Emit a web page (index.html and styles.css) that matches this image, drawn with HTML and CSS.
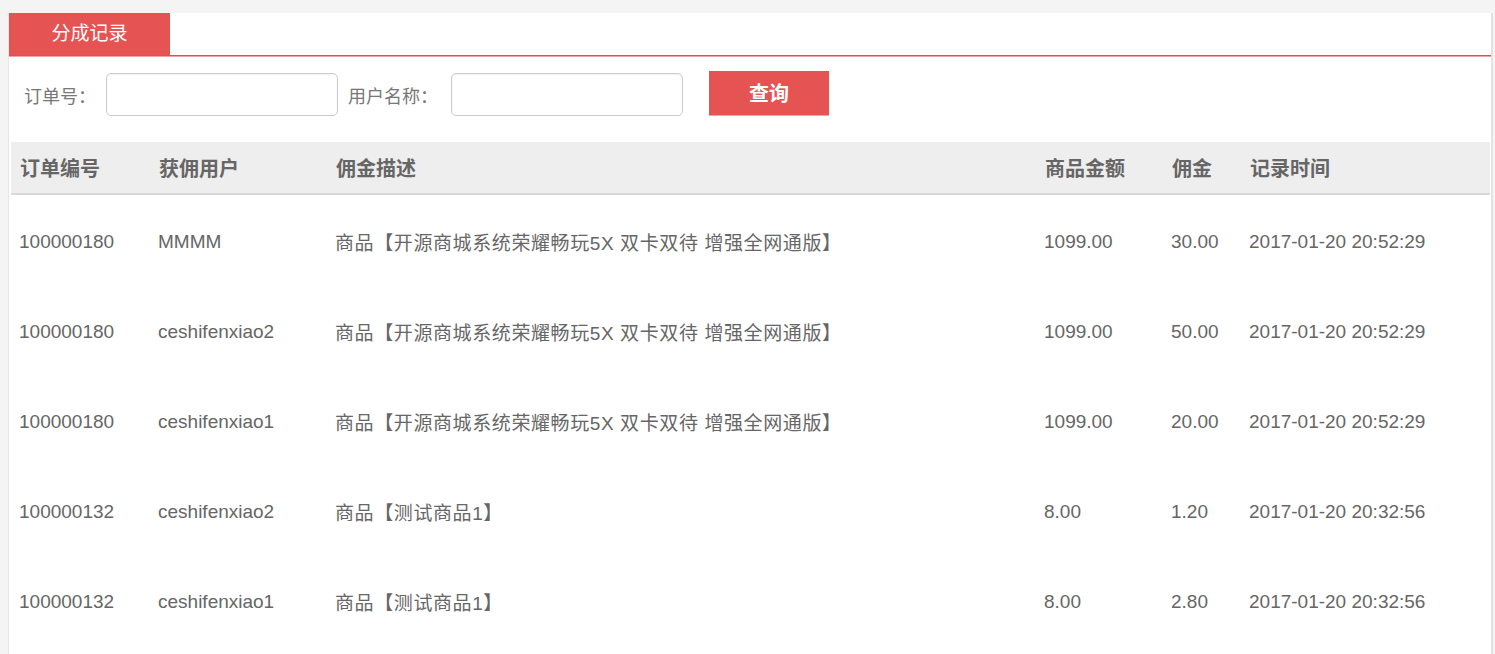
FILE: index.html
```html
<!DOCTYPE html>
<html lang="zh-CN">
<head>
  <meta charset="UTF-8">
  <meta name="viewport" content="width=device-width, initial-scale=1.0">
  <link rel="stylesheet" href="styles.css">
  <title>分成记录</title>
</head>
<body>

  <div id="record_wrap">

    <ul class="tab_list">
      <li class="on">分成记录</li>
    </ul>

    <div class="search_box">
      <label for="order_no">订单号：</label>
      <input type="text" id="order_no" class="txt">
      <label for="user_name" class="name_label">用户名称：</label>
      <input type="text" id="user_name" class="txt">
      <button class="search_btn">查询</button>
    </div>

    <table class="record_table">
      <colgroup>
        <col class="c1"><col class="c2"><col class="c3"><col class="c4"><col class="c5"><col class="c6">
      </colgroup>
      <thead>
        <tr>
          <th>订单编号</th><th>获佣用户</th><th>佣金描述</th><th>商品金额</th><th>佣金</th><th>记录时间</th>
        </tr>
      </thead>
      <tbody>
        <tr>
          <td>100000180</td><td>MMMM</td><td class="desc">商品【开源商城系统荣耀畅玩5X 双卡双待 增强全网通版】</td><td>1099.00</td><td>30.00</td><td>2017-01-20 20:52:29</td>
        </tr>
        <tr>
          <td>100000180</td><td>ceshifenxiao2</td><td class="desc">商品【开源商城系统荣耀畅玩5X 双卡双待 增强全网通版】</td><td>1099.00</td><td>50.00</td><td>2017-01-20 20:52:29</td>
        </tr>
        <tr>
          <td>100000180</td><td>ceshifenxiao1</td><td class="desc">商品【开源商城系统荣耀畅玩5X 双卡双待 增强全网通版】</td><td>1099.00</td><td>20.00</td><td>2017-01-20 20:52:29</td>
        </tr>
        <tr>
          <td>100000132</td><td>ceshifenxiao2</td><td class="desc">商品【测试商品1】</td><td>8.00</td><td>1.20</td><td>2017-01-20 20:32:56</td>
        </tr>
        <tr>
          <td>100000132</td><td>ceshifenxiao1</td><td class="desc">商品【测试商品1】</td><td>8.00</td><td>2.80</td><td>2017-01-20 20:32:56</td>
        </tr>
      </tbody>
    </table>

  </div>

</body>
</html>
```

FILE: styles.css
```css
body,ul,li{
  margin:0px; padding:0px; list-style:none;
}

body{
  background:#f4f4f4; padding:13px 2px 0px 8px;
  font-family:"Liberation Sans","Noto Sans CJK SC",sans-serif; color:#666;
  overflow:hidden;
}

div#record_wrap{
  background:#fff; border-left:1px solid #e6e6e6; border-right:2px solid #e3e3e3;
  min-height:700px;
}

ul.tab_list{
  display:flex; height:42px; border-bottom:1px solid #e05050; box-shadow:0px 1px 0px #f3a3a3;
}

ul.tab_list li{
  width:161px; line-height:42px; text-align:center; font-size:19px; color:#fff;
}

ul.tab_list li.on{
  background:#e55353;
}

div.search_box{
  display:flex; align-items:center; padding:16px 0px 0px 15px; height:45px;
}

div.search_box label{
  font-size:18px; color:#777; margin-right:10px;
}

div.search_box label.name_label{
  margin-right:13px;
}

div.search_box input.txt{
  width:230px; height:41px; border:1px solid #ccc; border-radius:5px; padding:0px;
  box-shadow:inset 0px 1px 2px rgba(0,0,0,0.06); margin-right:10px;
}

button.search_btn{
  width:120px; height:45px; margin-left:16px; margin-top:-3px; border:none;
  background:#e55353; color:#fff; font-size:20px; font-weight:bold;
  font-family:"Liberation Serif","Noto Sans CJK SC",serif;
  border-bottom:1px solid #f3a3a3;
}

table.record_table{
  width:1479px; margin:25px 0px 0px 2px; border-collapse:collapse; table-layout:fixed;
}

col.c1{ width:139px; }
col.c2{ width:177px; }
col.c3{ width:709px; }
col.c4{ width:127px; }
col.c5{ width:78px; }
col.c6{ width:249px; }

table.record_table th{
  height:51px; background:#eee; border-bottom:2px solid #d9d9d9;
  text-align:left; padding:0px 0px 0px 9px; font-size:20px; font-weight:bold; color:#666;
}

table.record_table td{
  height:87px; padding:3px 0px 0px 8px; font-size:19px; color:#666; white-space:nowrap;
}

table.record_table td.desc{
  letter-spacing:0.6px;
}
```
